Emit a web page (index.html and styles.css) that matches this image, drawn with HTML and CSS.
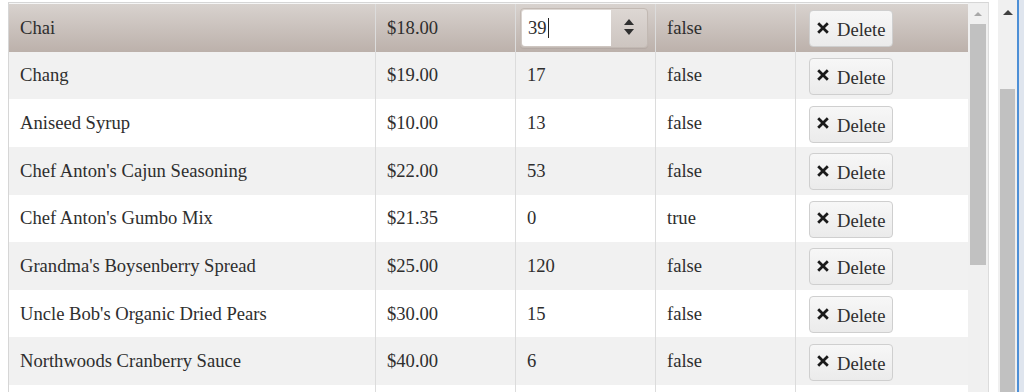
FILE: index.html
```html
<!DOCTYPE html>
<html>
<head>
<meta charset="utf-8">
<link rel="stylesheet" href="styles.css">
</head>
<body>
<div class="window">
  <div class="page">
    <div class="grid">
      <div class="grid-content">
        <div class="row selected">
          <div class="cell">Chai</div>
          <div class="cell">$18.00</div>
          <div class="cell edit">
            <span class="numeric">
              <span class="num-input">39<span class="caret"></span></span>
              <span class="spin">
                <span class="up"></span>
                <span class="down"></span>
              </span>
            </span>
          </div>
          <div class="cell">false</div>
          <div class="cell cmd"><span class="btn"><svg class="x" viewBox="0 0 10 10"><path d="M1 1L9 9M9 1L1 9"/></svg><span class="label">Delete</span></span></div>
        </div>
        <div class="row alt">
          <div class="cell">Chang</div>
          <div class="cell">$19.00</div>
          <div class="cell">17</div>
          <div class="cell">false</div>
          <div class="cell cmd"><span class="btn"><svg class="x" viewBox="0 0 10 10"><path d="M1 1L9 9M9 1L1 9"/></svg><span class="label">Delete</span></span></div>
        </div>
        <div class="row">
          <div class="cell">Aniseed Syrup</div>
          <div class="cell">$10.00</div>
          <div class="cell">13</div>
          <div class="cell">false</div>
          <div class="cell cmd"><span class="btn"><svg class="x" viewBox="0 0 10 10"><path d="M1 1L9 9M9 1L1 9"/></svg><span class="label">Delete</span></span></div>
        </div>
        <div class="row alt">
          <div class="cell">Chef Anton's Cajun Seasoning</div>
          <div class="cell">$22.00</div>
          <div class="cell">53</div>
          <div class="cell">false</div>
          <div class="cell cmd"><span class="btn"><svg class="x" viewBox="0 0 10 10"><path d="M1 1L9 9M9 1L1 9"/></svg><span class="label">Delete</span></span></div>
        </div>
        <div class="row">
          <div class="cell">Chef Anton's Gumbo Mix</div>
          <div class="cell">$21.35</div>
          <div class="cell">0</div>
          <div class="cell">true</div>
          <div class="cell cmd"><span class="btn"><svg class="x" viewBox="0 0 10 10"><path d="M1 1L9 9M9 1L1 9"/></svg><span class="label">Delete</span></span></div>
        </div>
        <div class="row alt">
          <div class="cell">Grandma's Boysenberry Spread</div>
          <div class="cell">$25.00</div>
          <div class="cell">120</div>
          <div class="cell">false</div>
          <div class="cell cmd"><span class="btn"><svg class="x" viewBox="0 0 10 10"><path d="M1 1L9 9M9 1L1 9"/></svg><span class="label">Delete</span></span></div>
        </div>
        <div class="row">
          <div class="cell">Uncle Bob's Organic Dried Pears</div>
          <div class="cell">$30.00</div>
          <div class="cell">15</div>
          <div class="cell">false</div>
          <div class="cell cmd"><span class="btn"><svg class="x" viewBox="0 0 10 10"><path d="M1 1L9 9M9 1L1 9"/></svg><span class="label">Delete</span></span></div>
        </div>
        <div class="row alt">
          <div class="cell">Northwoods Cranberry Sauce</div>
          <div class="cell">$40.00</div>
          <div class="cell">6</div>
          <div class="cell">false</div>
          <div class="cell cmd"><span class="btn"><svg class="x" viewBox="0 0 10 10"><path d="M1 1L9 9M9 1L1 9"/></svg><span class="label">Delete</span></span></div>
        </div>
        <div class="row">
          <div class="cell"></div>
          <div class="cell"></div>
          <div class="cell"></div>
          <div class="cell"></div>
          <div class="cell"></div>
        </div>
      </div>
      <div class="vscroll">
        <span class="arrow-up light"></span>
        <span class="thumb inner-thumb"></span>
      </div>
    </div>
  </div>
  <div class="page-scroll">
    <span class="arrow-up dark"></span>
    <span class="thumb page-thumb"></span>
  </div>
  <div class="edge"></div>
</div>
</body>
</html>
```
FILE: styles.css
```css
html, body {
  margin: 0;
  padding: 0;
  background: #fff;
}

.window {
  display: flex;
  height: 392px;
  overflow: hidden;
  font-family: "Liberation Serif", "Times New Roman", serif;
  font-size: 18.6px;
  color: #2e2e2e;
}

.page {
  width: 998px;
  flex: none;
  box-sizing: border-box;
  padding: 2px 0 0 8px;
  background: #fff;
}

.grid {
  display: flex;
  width: 981px;
  height: 400px;
  box-sizing: border-box;
  border-left: 1px solid #d6d6d6;
  border-top: 1px solid #d6d6d6;
  border-right: 1px solid #dcdcdc;
}

.grid-content {
  width: 959px;
  flex: none;
  padding-top: 1px;
  background: #f6f6f6;
}

.row {
  display: grid;
  grid-template-columns: 366px 140px 140px 140px 173px;
  height: 47.625px;
  background: #fff;
}

.row.alt {
  background: #f1f1f1;
}

.row.selected {
  background: linear-gradient(#d8d2ce, #bcb1ab);
}

.cell {
  display: flex;
  align-items: center;
  box-sizing: border-box;
  padding-left: 11px;
  white-space: nowrap;
  overflow: hidden;
}

.cell + .cell {
  border-left: 1px solid #dcdcdc;
}

.cell.edit {
  padding-left: 4px;
}

.cell.cmd {
  padding-left: 13px;
  padding-top: 2px;
}

.numeric {
  display: flex;
  width: 128px;
  height: 40px;
  box-sizing: border-box;
  border: 1px solid #c2b9b3;
  border-radius: 4px;
  padding: 1px;
  background: linear-gradient(#ddd7d3, #cdc5c0);
  box-shadow: 0 1px 1px rgba(0,0,0,0.06);
}

.num-input {
  display: flex;
  align-items: center;
  width: 89px;
  height: 36px;
  box-sizing: border-box;
  padding-left: 6px;
  background: #fff;
  border-radius: 3px 0 0 3px;
  color: #2e2e2e;
}

.caret {
  display: inline-block;
  width: 1px;
  height: 20px;
  background: #222;
  margin-left: 1px;
}

.spin {
  flex: 1;
  display: flex;
  flex-direction: column;
  align-items: center;
  justify-content: center;
  gap: 4px;
  padding-bottom: 2px;
}

.spin .up {
  width: 0;
  height: 0;
  border-left: 5px solid transparent;
  border-right: 5px solid transparent;
  border-bottom: 6px solid #2f2f2f;
}

.spin .down {
  width: 0;
  height: 0;
  border-left: 5px solid transparent;
  border-right: 5px solid transparent;
  border-top: 6px solid #2f2f2f;
}

.btn {
  display: flex;
  align-items: center;
  width: 84px;
  height: 37px;
  box-sizing: border-box;
  padding-left: 7px;
  border: 1px solid #cfcfcf;
  border-radius: 4px;
  background: linear-gradient(#f7f7f7, #ebebeb);
  color: #2e2e2e;
}

.label {
  padding-top: 3px;
}

.x {
  width: 12px;
  height: 12px;
  margin-right: 8px;
  margin-top: -2px;
  fill: none;
  stroke: #1a1a1a;
  stroke-width: 2.3;
}

.vscroll {
  width: 20px;
  flex: none;
  display: flex;
  flex-direction: column;
  align-items: center;
  background: #f0f0f0;
  box-sizing: border-box;
  padding-top: 9px;
}

.arrow-up {
  width: 0;
  height: 0;
  border-left: 4px solid transparent;
  border-right: 4px solid transparent;
}

.arrow-up.light {
  border-bottom: 4px solid #a8a8a8;
}

.arrow-up.dark {
  border-left-width: 5px;
  border-right-width: 5px;
  border-bottom: 5px solid #404040;
}

.thumb {
  display: block;
  background: #c1c1c1;
}

.inner-thumb {
  width: 16px;
  height: 241px;
  margin-top: 8px;
}

.page-scroll {
  width: 19px;
  flex: none;
  display: flex;
  flex-direction: column;
  align-items: center;
  background: #f0f0f0;
  padding-top: 10px;
  box-sizing: border-box;
}

.page-thumb {
  width: 15px;
  height: 320px;
  margin-top: 74px;
}

.edge {
  flex: 1;
  border-left: 2px solid #4d8fd6;
  background: #dfe5ee;
}
```
